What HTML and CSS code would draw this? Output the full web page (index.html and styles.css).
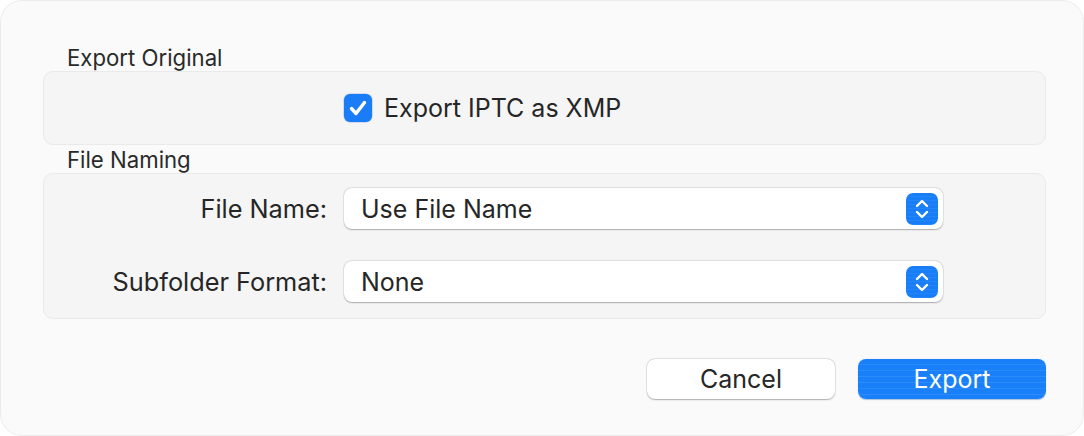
FILE: index.html
```html
<!DOCTYPE html>
<html>
<head>
<meta charset="utf-8">
<link rel="stylesheet" href="styles.css">
</head>
<body>
<div class="window">
  <div class="section-label">Export Original</div>
  <div class="group group-check">
    <label class="check-row">
      <span class="checkbox">
        <svg viewBox="0 0 28 28" width="28" height="28"><path d="M7.5 14.5 L12 19.5 L20.5 8.5" fill="none" stroke="#fff" stroke-width="3.4" stroke-linecap="round" stroke-linejoin="round"/></svg>
      </span>
      <span class="check-text">Export IPTC as XMP</span>
    </label>
  </div>
  <div class="section-label">File Naming</div>
  <div class="group group-form">
    <div class="form-row">
      <span class="field-label">File Name:</span>
      <div class="popup">
        <span class="popup-text">Use File Name</span>
        <span class="stepper"><svg viewBox="0 0 32 32" width="32" height="32"><path d="M11 13 L16 8 L21 13 M11 19 L16 24 L21 19" fill="none" stroke="#fff" stroke-width="2.4" stroke-linecap="round" stroke-linejoin="round"/></svg></span>
      </div>
    </div>
    <div class="form-row">
      <span class="field-label">Subfolder Format:</span>
      <div class="popup">
        <span class="popup-text">None</span>
        <span class="stepper"><svg viewBox="0 0 32 32" width="32" height="32"><path d="M11 13 L16 8 L21 13 M11 19 L16 24 L21 19" fill="none" stroke="#fff" stroke-width="2.4" stroke-linecap="round" stroke-linejoin="round"/></svg></span>
      </div>
    </div>
  </div>
  <div class="buttons">
    <button class="btn btn-cancel">Cancel</button>
    <button class="btn btn-primary">Export</button>
  </div>
</div>
</body>
</html>
```
FILE: styles.css
```css
* { box-sizing: border-box; }
html, body { margin: 0; padding: 0; background: #ffffff; }
body { font-family: Inter, "Noto Sans", "Liberation Sans", sans-serif; color: #262626; }
.window {
  width: 1084px;
  height: 436px;
  background: #f9faf9;
  border: 1px solid #ececec;
  border-radius: 22px;
  padding: 44px 37px 0 42px;
  display: flex;
  flex-direction: column;
}
.section-label {
  font-size: 22.2px;
  line-height: 26px;
  padding-left: 24px;
  height: 26px;
  color: #2a2a2a;
}
.group {
  background: #f4f5f4;
  border: 1px solid #e9eae9;
  border-radius: 10px;
}
.group-check {
  height: 74px;
  display: flex;
  align-items: center;
  padding-left: 300px;
  margin-bottom: 2px;
}
.check-row { display: flex; align-items: center; gap: 12px; }
.checkbox {
  width: 28px; height: 28px;
  border-radius: 6px;
  background: #1b7cf8;
  display: flex;
  box-shadow: 0 0 0 0.5px rgba(0,80,200,0.3);
}
.check-text { font-size: 25px; color: #262626; }
.group-form {
  height: 146px;
  display: flex;
  flex-direction: column;
  padding-top: 14px;
  gap: 32px;
}
.form-row { display: flex; align-items: center; height: 41px; }
.field-label {
  width: 283px;
  text-align: right;
  font-size: 25.3px;
  color: #262626;
}
.popup {
  margin-left: 17px;
  width: 599px;
  height: 41px;
  background: #ffffff;
  border-radius: 8px;
  box-shadow: 0 0.5px 1.5px rgba(0,0,0,0.28), 0 0 0 0.5px rgba(0,0,0,0.08);
  display: flex;
  align-items: center;
  justify-content: space-between;
  padding: 0 5px 0 17px;
}
.popup-text { font-size: 25px; color: #262626; line-height: 38px; }
.stepper {
  width: 32px; height: 32px;
  border-radius: 7px;
  background: repeating-linear-gradient(to bottom, #1a7df8 0px, #1a7df8 3px, #2385fa 3px, #2385fa 4px);
  display: flex;
}
.buttons {
  margin-top: 40px;
  display: flex;
  justify-content: flex-end;
  gap: 23px;
}
.btn {
  width: 188px;
  height: 40px;
  border-radius: 8px;
  font-family: inherit;
  font-size: 25px;
  line-height: 38px;
  padding: 0;
  border: none;
}
.btn-cancel {
  background: #ffffff;
  color: #262626;
  box-shadow: 0 0.5px 1.5px rgba(0,0,0,0.28), 0 0 0 0.5px rgba(0,0,0,0.1);
}
.btn-primary {
  background: repeating-linear-gradient(to bottom, #1a80fa 0px, #1a80fa 5px, #2a8cfb 5px, #2a8cfb 6px);
  color: #ffffff;
  box-shadow: 0 0.5px 1px rgba(0,60,160,0.3);
}
```
